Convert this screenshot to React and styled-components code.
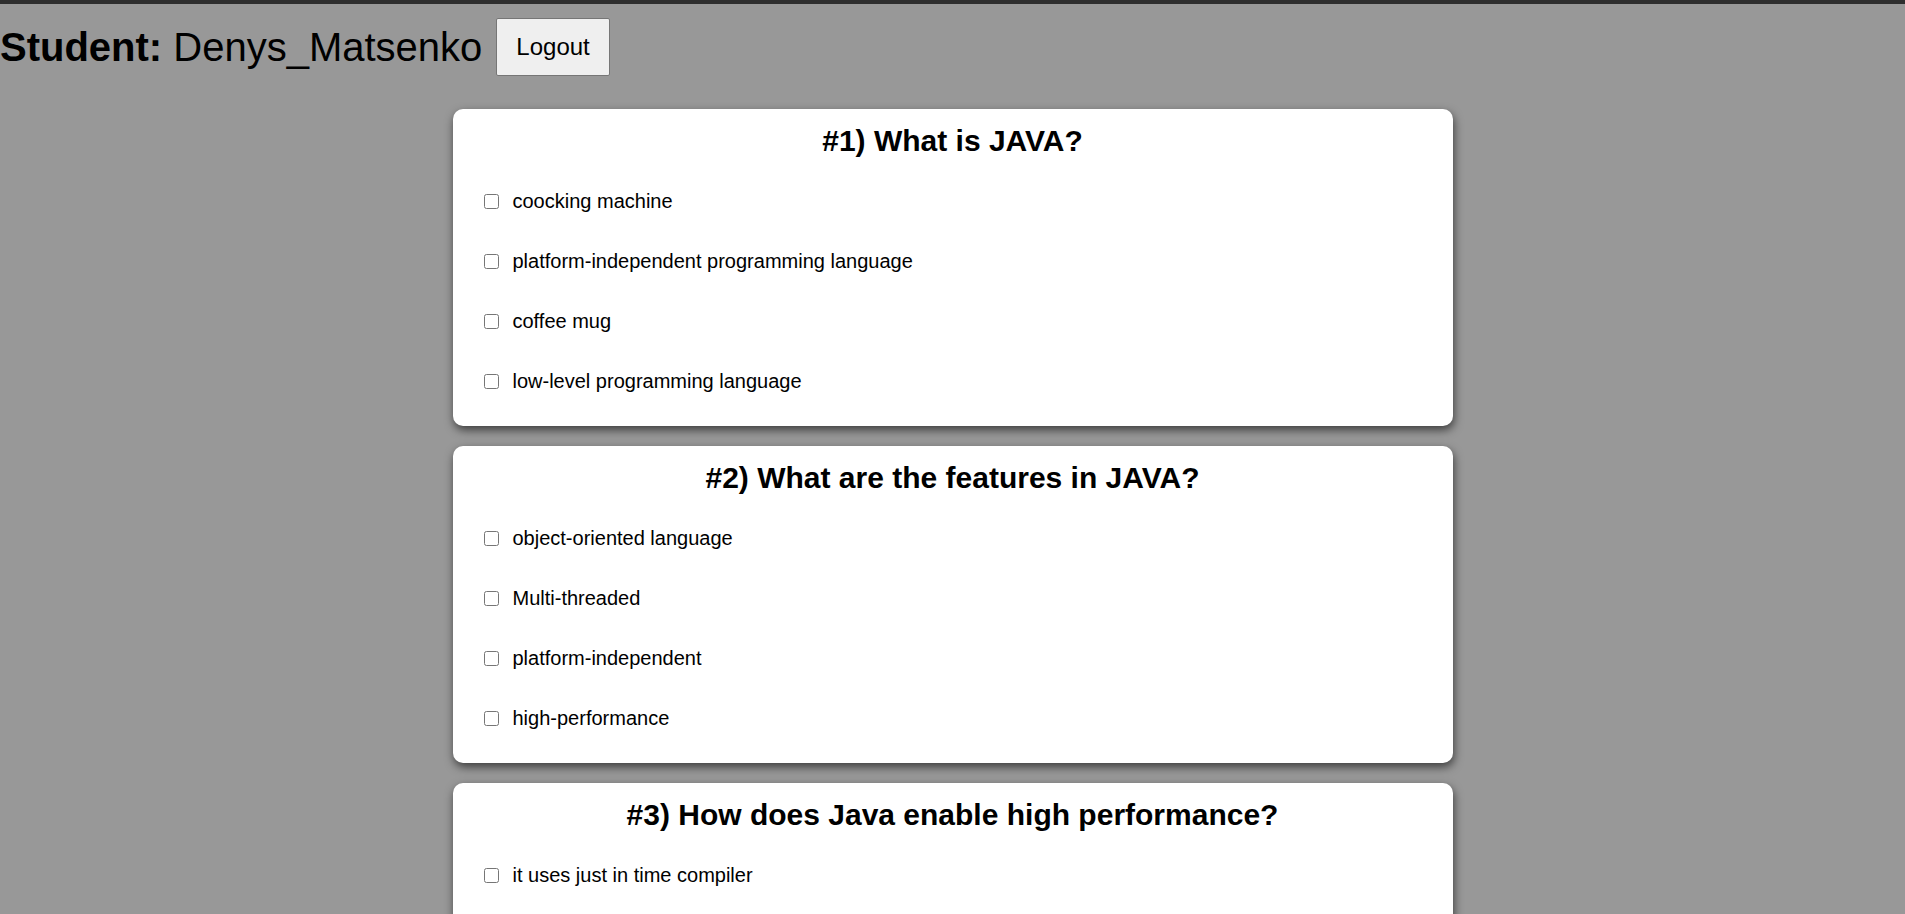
import React, { useState } from 'react'
import styled, { createGlobalStyle } from 'styled-components';

const questions = [
    {
        id: 1,
        title: 'What is JAVA?',
        options: [
            'coocking machine',
            'platform-independent programming language',
            'coffee mug',
            'low-level programming language',
        ],
    },
    {
        id: 2,
        title: 'What are the features in JAVA?',
        options: [
            'object-oriented language',
            'Multi-threaded',
            'platform-independent',
            'high-performance',
        ],
    },
    {
        id: 3,
        title: 'How does Java enable high performance?',
        options: [
            'it uses just in time compiler',
            'it uses interpreter only',
            'it is written in assembler',
            'it has no garbage collector',
        ],
    },
];

function App() {
    const [answers, setAnswers] = useState({});

    // toggle one option of one question
    const toggle = (qId, idx) => {
        const key = qId + '-' + idx;
        setAnswers({ ...answers, [key]: !answers[key] });
    };

    return (
        <>
            <GlobalStyle />
            <TopBar />
            <Header>
                <StudentName>
                    <strong>Student:</strong> Denys_Matsenko
                </StudentName>
                <LogoutButton>Logout</LogoutButton>
            </Header>
            <Quiz>
                {questions.map((q) => {
                    return (
                        <Card key={q.id}>
                            <h2>#{q.id}) {q.title}</h2>
                            {q.options.map((opt, i) => (
                                <Option key={i}>
                                    <input
                                        type="checkbox"
                                        checked={!!answers[q.id + '-' + i]}
                                        onChange={() => toggle(q.id, i)}
                                    />
                                    <span>{opt}</span>
                                </Option>
                            ))}
                        </Card>
                    )
                })}
            </Quiz>
        </>
    )
}

const GlobalStyle = createGlobalStyle`
    body {
        margin: 0;
        background: #989898;
        font-family: "Liberation Sans", Arial, sans-serif;
        color: #000;
    }
`

const TopBar = styled.div`
    height: 4px;
    background: #2e2e2e;
`

const Header = styled.div`
    display: flex;
    align-items: center;
    gap: 14px;
    padding-top: 14px;
`

const StudentName = styled.h1`
    margin: 0;
    font-size: 40px;
    font-weight: normal;
    line-height: normal;
`

const LogoutButton = styled.button`
    font-family: "Liberation Sans", Arial, sans-serif;
    font-size: 24px;
    padding: 14px 19px;
    background: #efefef;
    border: 1px solid #767676;
    border-radius: 2px;
    color: #000;
    cursor: pointer;
`

const Quiz = styled.div`
    display: flex;
    flex-direction: column;
    align-items: center;
    gap: 20px;
    padding: 33px 0 20px;
`

const Card = styled.div`
    width: 1000px;
    box-sizing: border-box;
    padding: 15px 28px 15px;
    background: #fff;
    border-radius: 10px;
    box-shadow: 1px 4px 10px rgba(0, 0, 0, 0.6);
    font-size: 20px;

    h2 {
        margin: 0 0 13px;
        font-size: 30px;
        text-align: center;
    }
`

const Option = styled.label`
    display: flex;
    align-items: center;
    height: 60px;

    input {
        margin: 3px 2px 3px 3px;
        width: 15px;
        height: 15px;
    }

    span {
        margin-left: 12px;
    }
`

export default App
